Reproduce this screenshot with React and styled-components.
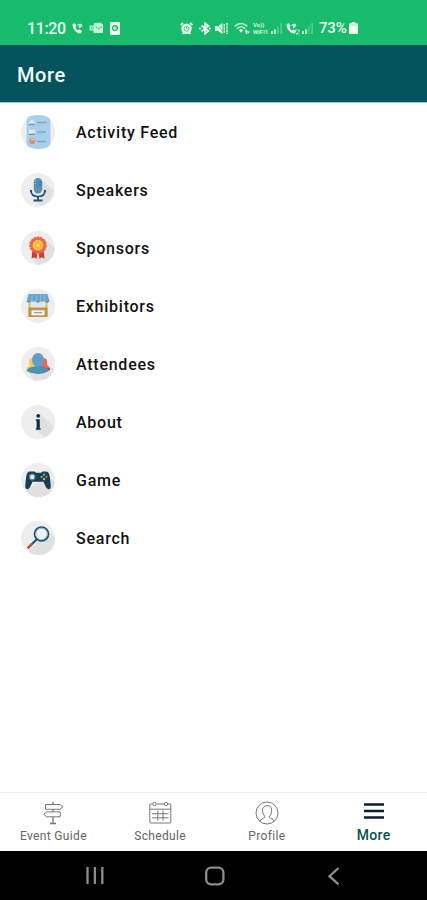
import React from 'react';
import styled, { createGlobalStyle } from 'styled-components';

const App = () => {
  return (
    <Screen>
      <GlobalStyle />
      <StatusBar>
        <Time>11:20</Time>
        <StatusIcon $ml={7} width="11" height="12" viewBox="0 0 11 12">
          <CallShape />
        </StatusIcon>
        <StatusIcon $ml={6} width="15" height="12" viewBox="0 0 15 12">
          <path d="M5 .8h7l2 2V11H4.500V8.500H.5v-5H5z" opacity="0.8" />
          <path d="M6.500 4.500l3 2.500L13 4.500" fill="none" stroke="#18ba6c" strokeWidth="0.8" />
          <circle cx="3.4" cy="6" r="1.2" fill="none" stroke="#18ba6c" strokeWidth="0.6" />
        </StatusIcon>
        <StatusIcon $ml={6} width="10" height="13" viewBox="0 0 10 13">
          <rect width="10" height="13" rx="1.2" />
          <circle cx="5" cy="6" r="2.4" fill="none" stroke="#18ba6c" strokeWidth="1.3" />
          <path d="M5 4.5V6h1.5" fill="none" stroke="#18ba6c" strokeWidth="0.7" />
        </StatusIcon>
        <StatusRight>
          <StatusIcon width="13" height="13" viewBox="0 0 13 13">
            <circle cx="6.5" cy="6.8" r="5.2" />
            <path d="M.6 3L3 .8M12.4 3L10 .8M2.5 12l1.4-1.5M10.5 12l-1.4-1.5" stroke="#effff0" strokeWidth="1.8" />
            <circle cx="6.5" cy="6.8" r="2.4" fill="none" stroke="#18ba6c" strokeWidth="0.8" />
            <path d="M6.5 5v2h1.3" fill="none" stroke="#18ba6c" strokeWidth="0.6" />
          </StatusIcon>
          <StatusIcon $ml={6} width="12" height="13" viewBox="0 0 12 13">
            <path d="M2.5 3.6l7 5.4L6 11.8V1.2l3.5 2.8-7 5.4" fill="none" stroke="#effff0" strokeWidth="1.7" />
            <circle cx="1.2" cy="6.5" r="1.1" />
            <circle cx="10.8" cy="6.5" r="1.1" />
          </StatusIcon>
          <StatusIcon $ml={4} width="13" height="13" viewBox="0 0 13 13">
            <path d="M0 4.3h3L7.500 1v11L3 8.700H0z" />
            <path d="M1 1l8 10" stroke="#18ba6c" strokeWidth="0.7" />
            <path d="M9.300 2v9M12 1v11" stroke="#effff0" strokeWidth="1.3" strokeDasharray="2.6 .6" />
          </StatusIcon>
          <StatusIcon $ml={6} width="16" height="13" viewBox="0 0 16 13">
            <path d="M.6 4.4c4-3.600 8.800-3.600 12.800 0M2.800 6.700c2.600-2.300 5.800-2.300 8.400 0" fill="none" stroke="#effff0" strokeWidth="1.5" opacity="0.75" />
            <path d="M4.800 8q2.200-1.600 4.400 0L7 10.800z" />
            <path d="M11 9l1.2-1.800L13.400 9v3h-1.200zM13.400 9.600h2.400l-1.200 2.200z" />
          </StatusIcon>
          <Volte>
            <span>Vo))</span>
            <span>WiFi1</span>
          </Volte>
          <SignalIcon $ml={1} />
          <StatusIcon $ml={3} width="14" height="13" viewBox="0 0 14 13">
            <CallShape />
            <path d="M9 8h4.5v1L10 12h3.5" fill="none" stroke="#effff0" strokeWidth="0.8" opacity="0.8" />
          </StatusIcon>
          <SignalIcon $ml={1} />
          <Percent>73%</Percent>
          <StatusIcon $ml={1} width="9" height="12" viewBox="0 0 9 12">
            <path d="M2.8 0h3.4v1.3H8q1 0 1 1V11q0 1-1 1H1q-1 0-1-1V2.3q0-1 1-1h1.8z" />
            <path d="M1.3 3h6.4" stroke="#18ba6c" strokeWidth="0.8" opacity="0.5" />
          </StatusIcon>
        </StatusRight>
      </StatusBar>
      <Header>More</Header>
      <Menu>
        {MENU.map(({ label, Icon, shade }) => (
          <MenuItem key={label}>
            <MenuIcon viewBox="0 0 34 34">
              <circle cx="17" cy="17" r="17" fill="#eeeeee" />
              {shade && <path d={shade} fill="#e0e0e0" />}
              <Icon />
            </MenuIcon>
            {label}
          </MenuItem>
        ))}
      </Menu>
      <TabBar>
        {TABS.map(({ label, Icon, active }) => (
          <Tab key={label} $active={active}>
            <TabIcon viewBox="0 0 24 24">
              <Icon />
            </TabIcon>
            <TabLabel $active={active}>{label}</TabLabel>
          </Tab>
        ))}
      </TabBar>
      <SystemNav>
        <NavIcon viewBox="0 0 20 20">
          <path d="M2.5 1v17M9.900 1v17M17.300 1v17" />
        </NavIcon>
        <NavIcon viewBox="0 0 20 20">
          <rect x="1.2" y="1.7" width="17.200" height="16.600" rx="5" />
        </NavIcon>
        <NavIcon viewBox="0 0 20 20">
          <path d="M14.500 2L5.500 10.200l9 8.200" />
        </NavIcon>
      </SystemNav>
    </Screen>
  );
};

const CallShape = () => (
  <>
    <path d="M.8 2l2-.7L4.500 4 3.400 5.500q1 2.200 2.800 3l1.500-1.200 2.300 1.800-1 2.100Q6.500 12.200 3.200 8.900 0 5.500.8 2z" />
    <path d="M5.600 3.500q1.800-1.700 4.200-.8M7 6q.5-1.500 2-1.400" fill="none" stroke="#effff0" strokeWidth="1.2" opacity="0.8" />
    <circle cx="8.6" cy="3.6" r="1.8" opacity="0.6" />
  </>
);

const SignalIcon = ({ $ml }) => (
  <StatusIcon $ml={$ml} width="13" height="12" viewBox="0 0 13 12">
    <path d="M1 9h1.800v3H1zM4 7.200h1.800V12H4z" opacity="0.85" />
    <path d="M7 4.500h1.800V12H7zM10.200 1H12v11h-1.800z" opacity="0.25" />
  </StatusIcon>
);

const FeedIcon = () => (
  <>
    <path d="M5.500 6Q5.500 2 10 1q7-2 14 0 5.500 1.500 5.500 5v22q0 3.500-5 5-7 2-14 0-5-1.500-5-5z" fill="#a9d0eb" />
    <path d="M16 7.500h9.500M16 17h9M16 26.500h9" stroke="#7ba7c4" strokeWidth="1.300" />
    <path d="M16 10h6M16 19.300h6" stroke="#96bfda" strokeWidth="0.700" />
    <circle cx="11" cy="7.500" r="2.400" fill="#d9e8ef" />
    <path d="M8 10q3-2 5.500 0" stroke="#617f91" fill="none" />
    <path d="M8 14.500h6v4H8z" fill="#e1eadc" />
    <path d="M8 19.400h6" stroke="#779c75" strokeWidth="1.300" />
    <circle cx="11.300" cy="26" r="3.100" fill="#dc8f7e" />
    <path d="M10 24.500h3" stroke="#f4d5c8" />
  </>
);

const MicIcon = () => (
  <>
    <rect x="12.800" y="5" width="8.400" height="15.500" rx="4.200" fill="#4c91b9" />
    <path d="M14.500 7.500v6" stroke="#86bcd9" strokeWidth="1.500" />
    <path d="M13 12h3M18 12h3M13 9.500h3M18 9.500h3" stroke="#2f678b" strokeWidth="0.700" />
    <path d="M13.500 16.500h7" stroke="#c7775d" strokeWidth="1.600" />
    <path d="M10 17.500q0 6 7 6t7-6" fill="none" stroke="#24567a" strokeWidth="1.700" />
    <path d="M17 23v4M12.500 27.500h9" stroke="#24567a" strokeWidth="1.900" />
    <circle cx="10" cy="18" r="1.200" fill="#24567a" />
    <circle cx="24" cy="18" r="1.200" fill="#24567a" />
  </>
);

const RibbonIcon = () => (
  <>
    <path d="M11.500 18l-1 9.500 3-1.300 2 1.800 1-7zM22.500 18l1 9.500-3-1.300-2 1.800-1-7z" fill="#cc3d31" />
    <circle cx="17" cy="14.200" r="8" fill="#ec6448" stroke="#ec6448" strokeWidth="1.600" strokeDasharray="2.300 1" />
    <circle cx="17" cy="14.200" r="5.400" fill="#ffc54a" />
    <circle cx="17" cy="14.200" r="3.600" fill="#f6b634" />
    <path d="M17 11.700l.8 1.700 1.700.2-1.300 1.200.4 1.800-1.600-.9-1.600.9.400-1.800-1.300-1.200 1.700-.2z" fill="#ffd35c" />
  </>
);

const BoothIcon = () => (
  <>
    <path d="M8 10h18v10H8z" fill="#dfe6ea" />
    <path d="M8.500 10v18M25.500 10v18" stroke="#e3c05c" strokeWidth="2.200" />
    <path d="M7.500 18.500h19V28h-19z" fill="#bf9450" />
    <path d="M10.500 21.300h13v5h-13z" fill="#f5f3ec" />
    <path d="M13 23.700h8" stroke="#6b96b1" />
    <path d="M7.500 5h19l2 7.500h-23z" fill="#6aa6cd" />
    <path d="M5.500 12.200h4.600q-2.300 2.500-4.600 0zM14.700 12.200h4.600q-2.300 2.500-4.600 0zM23.900 12.200h4.600q-2.300 2.500-4.600 0z" fill="#477fa9" />
    <path d="M11.500 6l-1 6M15.500 6v6M19.500 6v6M23 6l1 6" stroke="#8dbdda" strokeWidth="0.900" />
  </>
);

const PeopleIcon = () => (
  <>
    <path d="M8 15q0-4 3.500-4t3.500 4v8H5.500q0-3 3-4z" fill="#f2ce52" />
    <path d="M19 15q0-4 3.500-4t3.500 4v3q3 1.500 3 5H19z" fill="#ee6557" />
    <path d="M24 21.500h5l-.5 1.700H24z" fill="#9f3432" />
    <ellipse cx="17" cy="13" rx="6" ry="6.900" fill="#639eca" />
    <path d="M14 17h6v4h-6z" fill="#639eca" />
    <path d="M5.500 24q1-3.600 8.500-4.500h6q7.500 1 7.500 4.500Q23 27 17 27T5.500 24z" fill="#4a91b2" />
  </>
);

const InfoIcon = () => (
  <>
    <circle cx="17.200" cy="10.800" r="1.900" fill="#102d45" />
    <path d="M14.800 14.200h4v9h.8v1.500h-4.800v-1.500h.8v-7.500h-.8z" fill="#102d45" />
  </>
);

const GamepadIcon = () => (
  <>
    <path d="M8.500 8.500h5l1.500 1.300h5l1.500-1.300h4q2.600.4 3.300 5.200l1 9q0 3.500-2.300 3.500-2 0-4-5.200l-1-2.200h-11l-1 2.200q-2 5.200-4 5.200-2.300 0-2.300-3.500l1-9Q5.900 8.900 8.500 8.500z" fill="#173e55" />
    <circle cx="11.200" cy="14" r="3.400" fill="#577e94" />
    <circle cx="11.200" cy="14" r="2.200" fill="#e1edf1" />
    <circle cx="23" cy="11.600" r="1.100" fill="#7db7cb" />
    <circle cx="25.300" cy="13.900" r="1.100" fill="#d7694a" />
    <circle cx="23" cy="16.200" r="1.100" fill="#eac14f" />
    <circle cx="20.700" cy="13.900" r="1.100" fill="#d9a64c" />
  </>
);

const SearchIcon = () => (
  <>
    <path d="M7.500 26.500l8.500-8.500" stroke="#254e6e" strokeWidth="2.200" strokeLinecap="round" />
    <path d="M7.400 26.500l3.300-3.400" stroke="#b85a39" strokeWidth="2.300" strokeLinecap="round" />
    <circle cx="20.500" cy="13" r="7" fill="#eef2f3" stroke="#1d5272" strokeWidth="1.700" />
    <circle cx="20.500" cy="13" r="5.700" fill="none" stroke="#86afc2" strokeWidth="0.900" />
  </>
);

const SignpostIcon = () => (
  <>
    <path d="M12 .8v2.700M12 8.300v2.500M12 16v6.500M9 22.500h6" strokeWidth="1.300" />
    <path d="M4.500 3.500H19l2.800 2.400L19 8.300H4.500zM19 10.900H5.500l-2.800 2.400 2.800 2.500H19q1.500-2.500 0-4.900z" />
  </>
);

const CalendarIcon = () => (
  <>
    <path d="M4.500 3H2.800q-1 0-1 1v17q0 1 1 1h19q1 0 1-1V4q0-1-1-1H20M8.500 3H16M1.800 8.200h21" />
    <circle cx="6.500" cy="3" r="1.700" />
    <circle cx="18" cy="3" r="1.700" />
    <path d="M9.800 9.500v10M15 9.500v10M4 12.700h16.500M4 16.800h16.500" />
  </>
);

const ProfileIcon = () => (
  <>
    <circle cx="12" cy="12" r="11" />
    <path d="M5 20.500q.5-2.500 3.500-3.200 2-.7 1.300-2-2.300-2-2.300-6T12 4.700t4.500 4.600-2.300 6q-.7 1.300 1.300 2 3 .7 3.500 3.200" />
  </>
);

const BarsIcon = () => <path d="M2 3.500h20M2 10h20M2 16.500h20" stroke="#0c202b" strokeWidth="2.600" />;

const MENU = [
  { label: 'Activity Feed', Icon: FeedIcon },
  { label: 'Speakers', Icon: MicIcon, shade: 'M21 7l11 10q0 6-3 10l-8 6-9-6 9-1z' },
  { label: 'Sponsors', Icon: RibbonIcon, shade: 'M23 8l11 9q-.5 8-7 13l-10 4-6-7 6-3z' },
  { label: 'Exhibitors', Icon: BoothIcon },
  { label: 'Attendees', Icon: PeopleIcon, shade: 'M27 19l6 3q-3 8-9 10l-10 2-8-10z' },
  { label: 'About', Icon: InfoIcon, shade: 'M19 9l14 13q-3 8-9 10l-9-7h4z' },
  { label: 'Game', Icon: GamepadIcon, shade: 'M29 14l5 5q-3 15-17 15-8 0-12-6l3-3 10-6z' },
  { label: 'Search', Icon: SearchIcon, shade: 'M26 9l8 8q-1 17-17 17-5 0-9-4l9-10z' },
];

const TABS = [
  { label: 'Event Guide', Icon: SignpostIcon },
  { label: 'Schedule', Icon: CalendarIcon },
  { label: 'Profile', Icon: ProfileIcon },
  { label: 'More', Icon: BarsIcon, active: true },
];

const GlobalStyle = createGlobalStyle`
  * {
    box-sizing: border-box;
  }

  body {
    margin: 0;
    background-color: #fff;
    font-family: Roboto, 'Liberation Sans', sans-serif;
  }
`;

const Screen = styled.div`
  display: flex;
  flex-direction: column;
  width: 100%;
  height: 900px;
  overflow: hidden;
`;

const StatusBar = styled.div`
  display: flex;
  align-items: center;
  flex: none;
  height: 45px;
  padding: 11px 69px 0 27px;
  background-color: #18ba6c;
  color: #effff0;
`;

const Time = styled.span`
  width: 38px;
  font-size: 16px;
  font-weight: 500;
  letter-spacing: -0.4px;
  white-space: nowrap;
`;

const StatusRight = styled.div`
  display: flex;
  align-items: center;
  margin-left: auto;
`;

const StatusIcon = styled.svg`
  flex: none;
  margin-left: ${({ $ml }) => $ml || 0}px;
  fill: #effff0;
`;

const Volte = styled.div`
  display: flex;
  flex-direction: column;
  width: 16px;
  margin-left: 3px;
  font-size: 6px;
  font-weight: 700;
  line-height: 7px;
  white-space: nowrap;
  opacity: 0.85;
`;

const Percent = styled.span`
  width: 29px;
  margin-left: 5px;
  font-size: 15px;
  font-weight: 500;
  letter-spacing: -0.2px;
`;

const Header = styled.header`
  display: flex;
  align-items: center;
  flex: none;
  height: 58px;
  padding: 2px 17px 0;
  border-bottom: 1px solid #a9c1c5;
  background-color: #04525c;
  color: #f4fcfc;
  font-size: 20px;
  font-weight: 500;
  letter-spacing: 0.6px;
`;

const Menu = styled.ul`
  flex: 1;
  margin: 0;
  padding: 0;
  list-style: none;
`;

const MenuItem = styled.li`
  display: flex;
  align-items: center;
  height: 58px;
  padding-left: 21px;
  color: #111;
  font-size: 16px;
  font-weight: 500;
  letter-spacing: 0.75px;
`;

const MenuIcon = styled.svg`
  width: 34px;
  height: 34px;
  margin-right: 21px;
`;

const TabBar = styled.nav`
  display: flex;
  flex: none;
  height: 59px;
  border-top: 1px solid #efefef;
`;

const Tab = styled.div`
  display: flex;
  flex: 1;
  flex-direction: column;
  align-items: center;
  padding-top: 8px;
  color: ${({ $active }) => ($active ? '#0b5056' : '#666')};
`;

const TabIcon = styled.svg`
  width: 24px;
  height: 24px;
  fill: none;
  stroke: #777;
  stroke-width: 1;
`;

const TabLabel = styled.span`
  margin-top: ${({ $active }) => ($active ? 2 : 3)}px;
  font-size: ${({ $active }) => ($active ? 14 : 12)}px;
  font-weight: ${({ $active }) => ($active ? 500 : 400)};
  line-height: 16px;
  letter-spacing: 0.35px;
`;

const SystemNav = styled.div`
  display: flex;
  justify-content: space-between;
  flex: none;
  height: 49px;
  padding: 15px 83px 0 85px;
  background-color: #000;
`;

const NavIcon = styled.svg`
  width: 20px;
  height: 20px;
  fill: none;
  stroke: #8c8c8c;
  stroke-width: 2.3;
`;

export default App;
